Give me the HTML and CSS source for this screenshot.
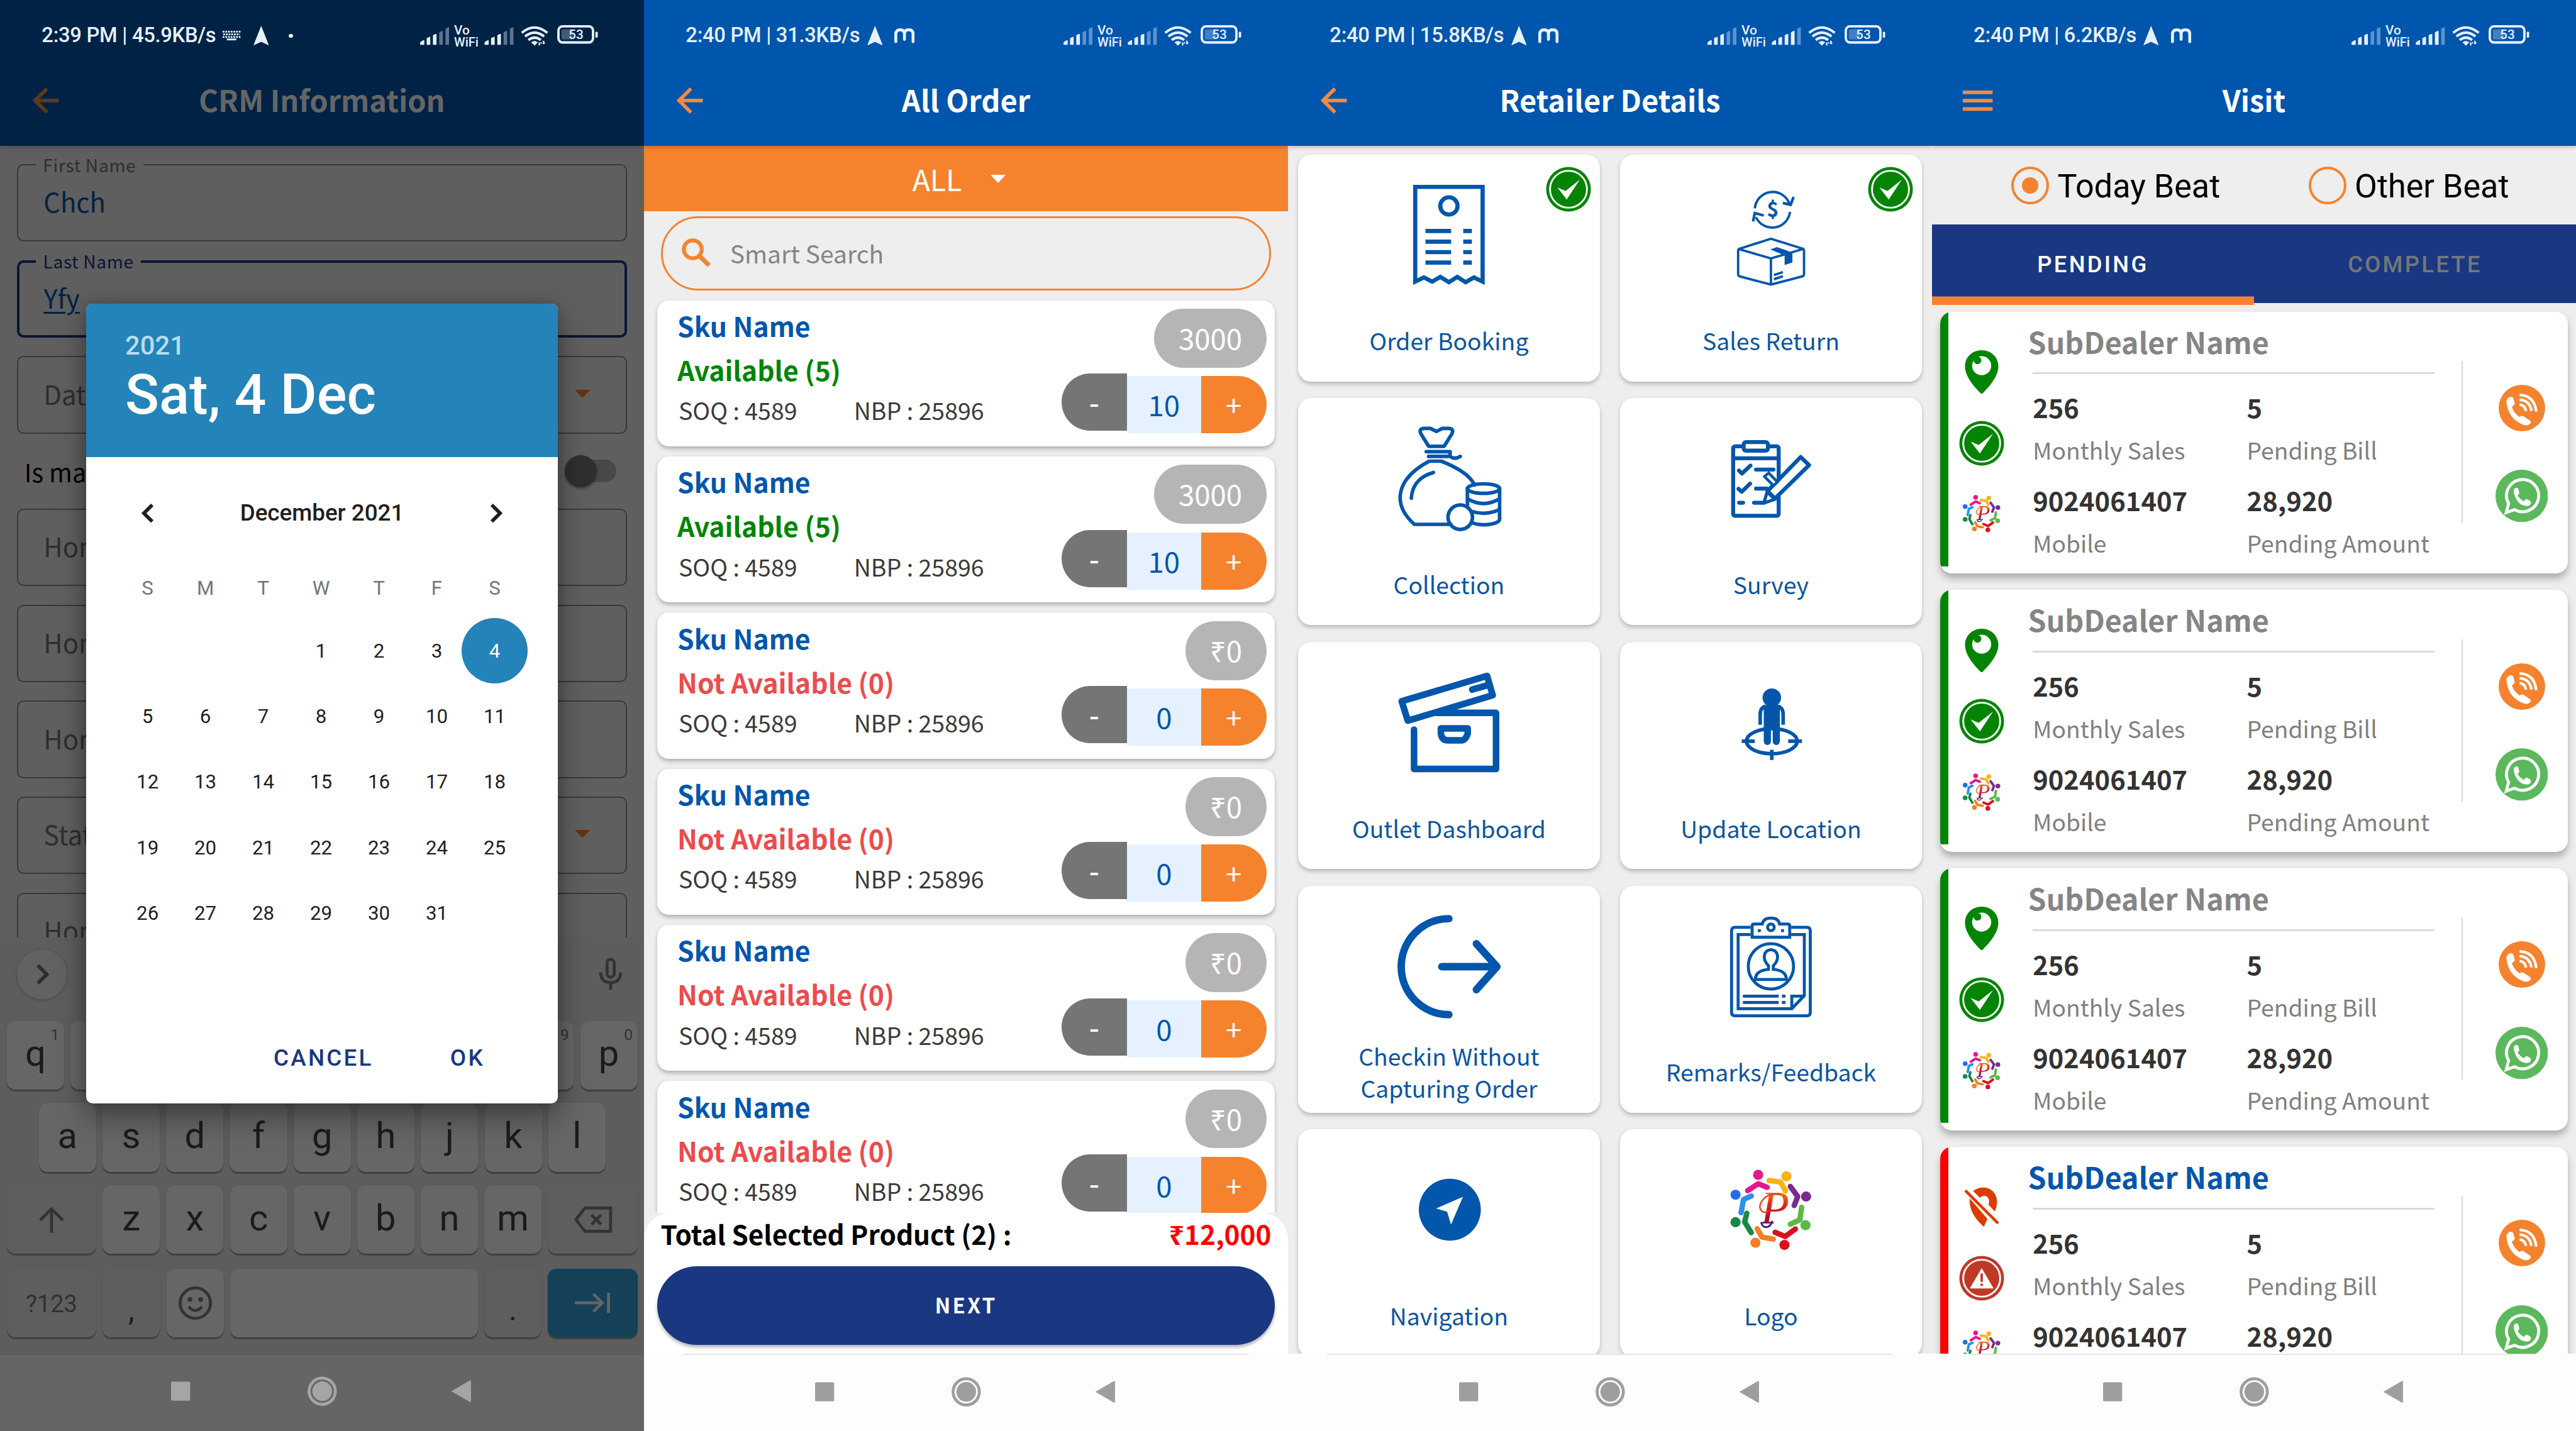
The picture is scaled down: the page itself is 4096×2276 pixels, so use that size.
FILE: index.html
```html
<!DOCTYPE html>
<html lang="en">
<head>
<meta charset="utf-8">
<title>Field Sales App</title>
<link rel="stylesheet" href="styles.css">
</head>
<body>
<svg class="sprite" aria-hidden="true">
  <defs>
    <linearGradient id="pGrad" x1="0" y1="0" x2="0" y2="1">
      <stop offset="0" stop-color="#ffc20e"/><stop offset=".45" stop-color="#e2231a"/><stop offset=".7" stop-color="#b0122a"/><stop offset="1" stop-color="#1b1a9c"/>
    </linearGradient>
    <symbol id="system" viewBox="0 0 300 36">
      <g fill="#e6f1ff">
        <path d="M0 33v-4q4-4 7-4v8zM11 33V22q3-2 6-2.500v13.500zM21.500 33V17q3-2 6-2.500v18.500z"/>
        <path opacity=".4" d="M32 33V12q3-2 6-2.500v23.500zM42.500 33V6q3-2 6-2.500v29.500z"/>
        <path d="M108 33v-4q4-4 7-4v8zM119 33V22q3-2 6-2.500v13.500zM129.500 33V17q3-2 6-2.500v18.500z"/>
        <path opacity=".4" d="M140 33V12q3-2 6-2.500v23.500z"/>
        <path opacity=".4" d="M150.500 33V6q3-2 6-2.500v29.500z"/>
        <text class="svg-net" x="57" y="15.500">Vo</text>
        <text class="svg-net" x="57" y="35.500" textLength="41" lengthAdjust="spacingAndGlyphs">WiFi</text>
        <path d="M186 28.500l6-2 5.500 2-5.500 6z"/>
        <path d="M200 29v5M204 29l-1.500 1.500M207 26v6M207 31l2-2" stroke="#e6f1ff" stroke-width="2.500"/>
        <rect x="237" y="7" width="19" height="17" rx="3" opacity=".28"/>
        <rect x="294" y="11" width="4" height="10" rx="1.500"/>
        <text class="svg-batt" x="261.500" y="23.500" text-anchor="middle">53</text>
      </g>
      <g fill="none" stroke="#e6f1ff">
        <path stroke-width="4.200" d="M170.500 13q21-18 43 0M176 19q16-13 32 0M181.500 25q10.500-8 21 0"/>
        <rect x="232" y="2" width="58" height="27" rx="7" stroke-width="4"/>
      </g>
    </symbol>
    <symbol id="locArrow" viewBox="0 0 26 33"><path fill="#e6f1ff" d="M13 0L26 33 13 27 0 33z"/></symbol>
    <symbol id="mMark" viewBox="0 0 34 25"><path fill="none" stroke="#e6f1ff" stroke-width="5" stroke-linecap="round" d="M2.500 22.500V10q0-7 7-7.500 7.500 0 7.500 7v9M17 9.500q0-7 7-7 7.500 0 7.500 7v13"/></symbol>
    <symbol id="back" viewBox="0 0 44 44"><path fill="none" stroke="currentColor" stroke-width="6" d="M44 22H4M24 2L4 22l20 20"/></symbol>
    <symbol id="navkeys" viewBox="0 0 504 50">
      <rect x="0" y="9" width="32" height="32" rx="2"/>
      <circle cx="253.500" cy="25" r="22" fill="none" stroke="currentColor" stroke-width="5"/><circle cx="253.500" cy="25" r="16.500"/>
      <path d="M470 25L501 7q2-1 2 1v34q0 2-2 1z"/>
    </symbol>
    <symbol id="check" viewBox="-38 -38 76 76">
      <circle r="37.500" fill="#048404"/><circle r="31" fill="none" stroke="#fff" stroke-width="3"/>
      <path fill="#fff" d="M-18.600-3L-5 3 19-16-3 17z"/>
    </symbol>
    <symbol id="alert" viewBox="-38 -38 76 76">
      <circle r="37.500" fill="#bf3927"/><circle r="31" fill="none" stroke="#fff" stroke-width="3"/>
      <path fill="#fff" d="M0-17L20 17h-40z"/><path stroke="#bf3927" stroke-width="4" d="M0-8V6M0 9v4"/>
    </symbol>
    <symbol id="pin" viewBox="0 0 56 73">
      <path fill="#048404" d="M28 0c16 0 28 12 28 27 0 18-17 36-26 45q-2 2-4 0C17 63 0 45 0 27 0 12 12 0 28 0z"/>
      <circle cx="28" cy="26" r="16" fill="#fff"/><circle cx="21" cy="17" r="6.500" fill="#048404"/>
    </symbol>
    <symbol id="pinOff" viewBox="0 0 62 70">
      <path fill="#dd3c00" d="M16 7C32-6 58 2 58 26q0 9-4 17L43 31c5-14-8-20-15-12zM10 20l31 36-6 14C20 57 8 40 10 20z"/>
      <path stroke="#dd3c00" stroke-width="5" d="M2 6l58 58"/>
    </symbol>
    <symbol id="call" viewBox="-39 -39 78 78">
      <circle r="39" fill="#f5832e"/>
      <path fill="#fff" d="M-26-12q2-7 8-7 3 0 4 4l2 7q0 3-5 6 4 11 13 17 4-3 7-1l9 6q5 3 2 6-5 5-12 2-26-10-28-40z"/>
      <path fill="none" stroke="#fff" stroke-width="4.500" d="M-4-22q25 1 28 28M-4-14q17 1 20 19M-4-6q9 1 11 11"/>
    </symbol>
    <symbol id="whatsapp" viewBox="-44 -44 88 88">
      <circle r="44" fill="#5cb85c"/>
      <path fill="none" stroke="#fff" stroke-width="5" d="M-26 28l4-15a27 27 0 1 1 10 10z"/>
      <path fill="#fff" d="M-13-11q4-5 7-1l2 7q0 2-3 4 4 7 11 10 3-5 6-3l5 3q2 6-5 8-16 0-22-18-2-6-1-10z"/>
    </symbol>
    <symbol id="logo" viewBox="183 65 140 140">
      <g fill="none" stroke-width="9" stroke-linecap="round" stroke-linejoin="round">
        <path stroke="#e5178c" d="M214 103l17.600-11.500 15 6"/><path stroke="#fbb216" d="M250 86l19 2.500 8.500 15"/>
        <path stroke="#7b2a90" d="M285.500 96l12.500 17-6 15"/><path stroke="#5db946" d="M304.500 131l-3 21-16 7.500"/>
        <path stroke="#d8121a" d="M294 167.500L277 180l-17-7"/><path stroke="#f37f26" d="M230 167l8 14 19 3.500"/>
        <path stroke="#168a42" d="M212.500 141l-3.500 14.500 11 18"/><path stroke="#2e8df5" d="M220 112l-13 6-4 22"/>
      </g>
      <circle cx="231.600" cy="76.500" r="8.500" fill="#e5178c"/><circle cx="279" cy="79" r="8.500" fill="#fbb216"/>
      <circle cx="312" cy="113" r="8.500" fill="#7b2a90"/><circle cx="311" cy="161" r="8.500" fill="#5db946"/>
      <circle cx="275.700" cy="194" r="8.500" fill="#d8121a"/><circle cx="227" cy="190.500" r="8.500" fill="#f37f26"/>
      <circle cx="193.700" cy="156" r="8.500" fill="#168a42"/><circle cx="193.700" cy="110" r="8.500" fill="#1f6fe8"/>
      <text class="svg-p" x="236" y="158" fill="url(#pGrad)">P</text>
      <path fill="none" stroke="#e2431a" stroke-width="2.500" d="M249 138c-12 5-18-6-12-16 7-12 20-15 32-12"/>
      <path fill="none" stroke="#35189a" stroke-width="3" stroke-linecap="round" d="M237 157c2 10 14 10 18-2"/>
    </symbol>
  </defs>
</svg>

<main class="board">

<!-- CRM information -->
<section class="phone dimmed">
  <header class="top">
    <div class="status"><span>2:39 PM | 45.9KB/s</span>
      <svg class="i-kbd" viewBox="0 0 30 16"><path stroke="#e6f1ff" stroke-width="3" stroke-dasharray="3 1.500" d="M0 1.500h30M1 6h28M0 10.500h30"/><path stroke="#e6f1ff" stroke-width="3" d="M7 14.500h16"/></svg>
      <svg class="i-arrow wide"><use href="#locArrow"/></svg><i class="dot"></i>
      <svg class="i-system"><use href="#system"/></svg></div>
    <div class="appbar"><svg class="i-back"><use href="#back"/></svg><h1>CRM Information</h1></div>
  </header>
  <div class="form">
    <div class="field"><label>First Name</label><span class="val">Chch</span></div>
    <div class="field focus"><label>Last Name</label><span class="val"><u>Yfy</u></span></div>
    <div class="field"><span>Date</span><i class="caret"></i></div>
    <div class="switch-row"><span>Is ma</span><i class="switch"></i></div>
    <div class="field"><span>Home</span></div>
    <div class="field"><span>Home</span></div>
    <div class="field"><span>Home</span></div>
    <div class="field"><span>State</span><i class="caret"></i></div>
    <div class="field"><span>Home</span></div>
  </div>
  <div class="keyboard">
    <div class="suggest">
      <svg class="i-more" viewBox="0 0 84 84"><circle cx="42" cy="42" r="42" fill="#f4f4f4"/><path fill="none" stroke="#707070" stroke-width="6" d="M35 27l15 15-15 15"/></svg>
      <svg class="i-mic" viewBox="0 0 40 54"><rect x="14" y="3" width="12" height="30" rx="6" fill="none" stroke="#808080" stroke-width="5"/><path fill="none" stroke="#808080" stroke-width="5" d="M3 25q1 17 17 17t17-17M20 42v12"/></svg>
    </div>
    <div class="keys"><b>q<sup>1</sup></b><b></b><b></b><b></b><b></b><b></b><b></b><b></b><b><sup>9</sup></b><b>p<sup>0</sup></b></div>
    <div class="keys inset"><b>a</b><b>s</b><b>d</b><b>f</b><b>g</b><b>h</b><b>j</b><b>k</b><b>l</b></div>
    <div class="keys"><b class="fn"><svg class="i-shift" viewBox="0 0 44 44"><path fill="none" stroke="#808080" stroke-width="5" d="M22 44V4M3 23L22 4l19 19"/></svg></b><b>z</b><b>x</b><b>c</b><b>v</b><b>b</b><b>n</b><b>m</b><b class="fn"><svg class="i-del" viewBox="0 0 64 44"><path fill="none" stroke="#808080" stroke-width="5" d="M18 2.500h43v39H18L3 22zM29 14l16 16M45 14L29 30"/></svg></b></div>
    <div class="keys last"><b class="fn num">?123</b><b class="fn one">,</b><b class="smile"><svg class="i-smile" viewBox="0 0 56 56"><circle cx="28" cy="28" r="25.500" fill="none" stroke="#808080" stroke-width="5"/><circle cx="19" cy="22" r="4" fill="#808080"/><circle cx="37" cy="22" r="4" fill="#808080"/><path fill="none" stroke="#808080" stroke-width="5" d="M17 34q11 13 22 0"/></svg></b><b class="space"></b><b class="fn one">.</b><b class="fn enter"><svg class="i-tab" viewBox="0 0 60 36"><path fill="none" stroke="#f4f9fc" stroke-width="5" d="M0 18h46M31 3l15 15-15 15M56.500 1v34"/></svg></b></div>
  </div>
  <footer class="nav"><svg class="i-nav"><use href="#navkeys"/></svg></footer>
  <div class="scrim"></div>
  <div class="dialog">
    <div class="dialog-head"><p class="year">2021</p><p class="date">Sat, 4 Dec</p></div>
    <div class="month"><svg viewBox="0 0 20 32"><path fill="none" stroke="#1f1f1f" stroke-width="6" d="M18 2L4 16l14 14"/></svg><span>December 2021</span><svg viewBox="0 0 20 32"><path fill="none" stroke="#1f1f1f" stroke-width="6" d="M2 2l14 14L2 30"/></svg></div>
    <div class="dow"><span>S</span><span>M</span><span>T</span><span>W</span><span>T</span><span>F</span><span>S</span></div>
    <div class="days"><span></span><span></span><span></span><span>1</span><span>2</span><span>3</span><span class="on">4</span><span>5</span><span>6</span><span>7</span><span>8</span><span>9</span><span>10</span><span>11</span><span>12</span><span>13</span><span>14</span><span>15</span><span>16</span><span>17</span><span>18</span><span>19</span><span>20</span><span>21</span><span>22</span><span>23</span><span>24</span><span>25</span><span>26</span><span>27</span><span>28</span><span>29</span><span>30</span><span>31</span></div>
    <div class="actions"><span>CANCEL</span><span>OK</span></div>
  </div>
</section>

<!-- All order -->
<section class="phone">
  <header class="top">
    <div class="status"><span>2:40 PM | 31.3KB/s</span><svg class="i-arrow"><use href="#locArrow"/></svg><svg class="i-m"><use href="#mMark"/></svg><svg class="i-system"><use href="#system"/></svg></div>
    <div class="appbar"><svg class="i-back"><use href="#back"/></svg><h1>All Order</h1></div>
  </header>
  <div class="filter"><span>ALL</span><i class="caret white"></i></div>
  <div class="orders">
    <div class="search"><svg viewBox="0 0 49 48"><circle cx="18.500" cy="18.500" r="15" fill="none" stroke="#f5832e" stroke-width="6.500"/><path stroke="#f5832e" stroke-width="7.500" d="M28 28l18 17.500"/></svg><span>Smart Search</span></div>
    <article class="sku"><div class="info"><h2>Sku Name</h2><p class="ok">Available (5)</p><p class="meta"><span>SOQ : 4589</span><span>NBP : 25896</span></p></div><div class="side"><span class="pill">3000</span><div class="step"><b>-</b><span>10</span><i>+</i></div></div></article>
    <article class="sku"><div class="info"><h2>Sku Name</h2><p class="ok">Available (5)</p><p class="meta"><span>SOQ : 4589</span><span>NBP : 25896</span></p></div><div class="side"><span class="pill">3000</span><div class="step"><b>-</b><span>10</span><i>+</i></div></div></article>
    <article class="sku"><div class="info"><h2>Sku Name</h2><p class="no">Not Available (0)</p><p class="meta"><span>SOQ : 4589</span><span>NBP : 25896</span></p></div><div class="side"><span class="pill">₹0</span><div class="step"><b>-</b><span>0</span><i>+</i></div></div></article>
    <article class="sku"><div class="info"><h2>Sku Name</h2><p class="no">Not Available (0)</p><p class="meta"><span>SOQ : 4589</span><span>NBP : 25896</span></p></div><div class="side"><span class="pill">₹0</span><div class="step"><b>-</b><span>0</span><i>+</i></div></div></article>
    <article class="sku"><div class="info"><h2>Sku Name</h2><p class="no">Not Available (0)</p><p class="meta"><span>SOQ : 4589</span><span>NBP : 25896</span></p></div><div class="side"><span class="pill">₹0</span><div class="step"><b>-</b><span>0</span><i>+</i></div></div></article>
    <article class="sku"><div class="info"><h2>Sku Name</h2><p class="no">Not Available (0)</p><p class="meta"><span>SOQ : 4589</span><span>NBP : 25896</span></p></div><div class="side"><span class="pill">₹0</span><div class="step"><b>-</b><span>0</span><i>+</i></div></div></article>
  </div>
  <div class="summary"><div class="total"><span>Total Selected Product (2) :</span><strong>₹12,000</strong></div><div class="next">NEXT</div></div>
  <footer class="nav line"><svg class="i-nav"><use href="#navkeys"/></svg></footer>
</section>

<!-- Retailer details -->
<section class="phone">
  <header class="top">
    <div class="status"><span>2:40 PM | 15.8KB/s</span><svg class="i-arrow"><use href="#locArrow"/></svg><svg class="i-m"><use href="#mMark"/></svg><svg class="i-system" viewBox="0 0 300 36"><use href="#system"/><path fill="#e6f1ff" d="M140 33V12q3-2 6-2.500v23.500z"/></svg></div>
    <div class="appbar"><svg class="i-back"><use href="#back"/></svg><h1>Retailer Details</h1></div>
  </header>
  <div class="tiles">
    <article class="tile"><svg class="badge"><use href="#check"/></svg>
      <svg class="art" viewBox="0 0 506 256"><g class="ln" stroke-width="7"><path d="M196.500 213V54h113v159l-14.500-7-14 8-14-9-14 9-14.500-9-13.500 8-14-7z"/><circle cx="253" cy="86" r="14.500"/><path d="M213.700 128h43M277 128h14.500M213.700 146h43M277 146h14.500M213.700 163.500h43M277 163.500h14.500M213.700 181h43M277 181h14.500"/></g></svg>
      <p>Order Booking</p></article>
    <article class="tile"><svg class="badge"><use href="#check"/></svg>
      <svg class="art" viewBox="0 0 506 256"><g class="ln" stroke-width="4"><path d="M226 90a30 30 0 0 1 58-8M285 96a30 30 0 0 1-57 9"/><path d="M273 81l13 3 5-13M223 112l3-14 15 4" stroke-width="4.500"/><path stroke-linejoin="round" d="M253 141l54 17q1.500 1 1.500 3v39q0 3-2 4l-53.500 14-53-14q-2-1-2-4v-39q0-2 2-3zM198 158l55 16 55-16M253 174v44"/><path d="M258 202l15-5M258 209l15-5"/></g><path fill="#0256ab" d="M252 159l11-4 26 9v17l-13 4v-16l-12-5z"/><text class="svg-usd" x="256" y="104" text-anchor="middle">$</text></svg>
      <p>Sales Return</p></article>
    <article class="tile">
      <svg class="art" viewBox="0 0 506 256"><g class="ln" stroke-width="6" stroke-linecap="round" stroke-linejoin="round"><path d="M219 81l-13-21q-4-8 5-9h11l10 5 10-5h11q9 1 5 9l-13 21zM215 90h40v8h-36M255 98q8 6 17 0"/><path d="M256 212h-61c-40-36-28-78 25-106h20q46 18 56 40M190 168q2-33 37-43"/><ellipse cx="311" cy="152" rx="27" ry="8"/><path d="M284 152v30M338 152v52c-2 8-30 12-47 5M284 169q27 16 54 0M290 190q26 8 48-3"/><circle cx="272" cy="200" r="20.500"/></g></svg>
      <p>Collection</p></article>
    <article class="tile">
      <svg class="art" viewBox="0 0 506 256"><g class="ln" stroke-width="20" stroke-linecap="round" stroke-linejoin="round" transform="translate(168 47.700) scale(.33333)"><rect x="65" y="100" width="229" height="350" rx="10"/><rect x="118" y="79" width="122" height="43" rx="12" fill="#fff"/><path d="M65 160h229M94 222l15 15 43-40M92 314l16 15 42-41M95 384h20M180 217h88M180 313h56M170 384h50"/><path fill="#fff" d="M405 154l42 41-172 168-37-38z"/><path fill="#fff" stroke-width="16" d="M236 330l-17 56 56-19z"/><path fill="#fff" stroke-width="14" d="M244 234l-22 18 46 46 20-18z"/></g></svg>
      <p>Survey</p></article>
    <article class="tile">
      <svg class="art" viewBox="0 0 506 256"><g class="ln" stroke-width="11" stroke-linecap="round" stroke-linejoin="round"><path d="M173.800 99.500L317 57l9.500 32.500L184 132zM292 80l28-8M194.500 147v66H332v-94H232M239.500 145h45v9q-4 11-10 11h-24q-9 0-11-11z"/></g></svg>
      <p>Outlet Dashboard</p></article>
    <article class="tile">
      <svg class="art" viewBox="0 0 506 256"><g class="ln" stroke-width="6"><ellipse cx="254.500" cy="166.500" rx="42.500" ry="21"/><path d="M204 166.500h22M282 166.500h23M254.500 181v17"/><path d="M235 139v-17q0-12 9-14M273.500 139v-17q0-12-9-14"/></g><path fill="#0256ab" d="M241 106h27v61q-1 6-6 6t-6-6v-22h-3v22q-1 6-6 6t-6-6z"/><circle cx="254.500" cy="93.500" r="15.500" fill="#0256ab"/></svg>
      <p>Update Location</p></article>
    <article class="tile">
      <svg class="art" viewBox="0 0 506 256"><g class="ln" stroke-width="12.500" stroke-linecap="round" stroke-linejoin="round"><path d="M253 55a80 80.500 0 0 0 0 161M241 135.500h92M299 97l34.500 38.500L299 174"/></g></svg>
      <p>Checkin Without<br>Capturing Order</p></article>
    <article class="tile">
      <svg class="art" viewBox="0 0 506 256"><g class="ln" stroke-width="5"><path d="M219 69.500h-26q-6 0-6 6V212q0 6 6 6h120q6 0 6-6V75.500q0-6-6-6h-26"/><path d="M219 81.500h-21V206h90l21-22V81.500h-22M288 206v-21h21"/><path d="M221.500 86V67q0-3 4-3h13q2-10 14.500-10t14.500 10h13q4 0 4 3v19z"/><circle cx="253" cy="69.500" r="5.500"/><path d="M231 75h5M270 75h5M206 185h60M271.500 185h6M206 195.500h60M271.500 195.500h6"/><circle cx="253" cy="135" r="38"/><path d="M249 140v-6q-8-8-7-17t11-10q10 1 11 10t-7 17v6q22 2 22 17h-52q0-15 22-17z"/></g></svg>
      <p>Remarks/Feedback</p></article>
    <article class="tile">
      <svg class="art" viewBox="0 0 506 256"><circle cx="254.500" cy="135" r="52" fill="#0256ab"/><path fill="#fff" d="M276.500 113.500L231.500 133l18.500 5.500 6.500 21.500z"/></svg>
      <p>Navigation</p></article>
    <article class="tile">
      <svg class="art" viewBox="0 0 506 256"><use href="#logo" x="183" y="65" width="140" height="140"/></svg>
      <p>Logo</p></article>
  </div>
  <footer class="nav line"><svg class="i-nav"><use href="#navkeys"/></svg></footer>
</section>

<!-- Visit -->
<section class="phone">
  <header class="top">
    <div class="status"><span>2:40 PM | 6.2KB/s</span><svg class="i-arrow"><use href="#locArrow"/></svg><svg class="i-m"><use href="#mMark"/></svg><svg class="i-system" viewBox="0 0 300 36"><use href="#system"/><path fill="#e6f1ff" d="M140 33V12q3-2 6-2.500v23.500z"/></svg></div>
    <div class="appbar"><svg class="i-menu" viewBox="0 0 50 36"><path stroke="currentColor" stroke-width="6" d="M0 4h50M0 18h50M0 32h50"/></svg><h1>Visit</h1></div>
  </header>
  <div class="beats"><span class="radio on">Today Beat</span><span class="radio">Other Beat</span></div>
  <div class="tabs"><span class="on">PENDING</span><span>COMPLETE</span></div>
  <div class="dealers">
    <article class="dealer"><div class="marks"><svg class="i-pin"><use href="#pin"/></svg><svg class="i-check"><use href="#check"/></svg><svg class="i-logo"><use href="#logo"/></svg></div>
      <div class="body"><h2>SubDealer Name</h2><dl><div><dt>256</dt><dd>Monthly Sales</dd></div><div><dt>5</dt><dd>Pending Bill</dd></div><div><dt>9024061407</dt><dd>Mobile</dd></div><div><dt>28,920</dt><dd>Pending Amount</dd></div></dl></div>
      <div class="contact"><svg class="i-call"><use href="#call"/></svg><svg class="i-wa"><use href="#whatsapp"/></svg></div></article>
    <article class="dealer"><div class="marks"><svg class="i-pin"><use href="#pin"/></svg><svg class="i-check"><use href="#check"/></svg><svg class="i-logo"><use href="#logo"/></svg></div>
      <div class="body"><h2>SubDealer Name</h2><dl><div><dt>256</dt><dd>Monthly Sales</dd></div><div><dt>5</dt><dd>Pending Bill</dd></div><div><dt>9024061407</dt><dd>Mobile</dd></div><div><dt>28,920</dt><dd>Pending Amount</dd></div></dl></div>
      <div class="contact"><svg class="i-call"><use href="#call"/></svg><svg class="i-wa"><use href="#whatsapp"/></svg></div></article>
    <article class="dealer"><div class="marks"><svg class="i-pin"><use href="#pin"/></svg><svg class="i-check"><use href="#check"/></svg><svg class="i-logo"><use href="#logo"/></svg></div>
      <div class="body"><h2>SubDealer Name</h2><dl><div><dt>256</dt><dd>Monthly Sales</dd></div><div><dt>5</dt><dd>Pending Bill</dd></div><div><dt>9024061407</dt><dd>Mobile</dd></div><div><dt>28,920</dt><dd>Pending Amount</dd></div></dl></div>
      <div class="contact"><svg class="i-call"><use href="#call"/></svg><svg class="i-wa"><use href="#whatsapp"/></svg></div></article>
    <article class="dealer missed"><div class="marks"><svg class="i-pin"><use href="#pinOff"/></svg><svg class="i-check"><use href="#alert"/></svg><svg class="i-logo"><use href="#logo"/></svg></div>
      <div class="body"><h2>SubDealer Name</h2><dl><div><dt>256</dt><dd>Monthly Sales</dd></div><div><dt>5</dt><dd>Pending Bill</dd></div><div><dt>9024061407</dt></div><div><dt>28,920</dt></div></dl></div>
      <div class="contact"><svg class="i-call"><use href="#call"/></svg><svg class="i-wa"><use href="#whatsapp"/></svg></div></article>
  </div>
  <footer class="nav line"><svg class="i-nav"><use href="#navkeys"/></svg></footer>
</section>

</main>
</body>
</html>
```
FILE: styles.css
```css
:root {
  --blue: #0256ab;
  --navy: #1a3781;
  --orange: #f5832e;
  --green: #048404;
}
/* each handset is 108rem wide and 240rem tall */
html { font-size: 9.48148px; }
* { box-sizing: border-box; margin: 0; padding: 0; }
body {
  width: 432rem; height: 240rem; overflow: hidden; background: #fff;
  font-family: "Noto Sans CJK SC", "Noto Sans", sans-serif; font-size: 3.96rem;
}
i, b, em { font-style: normal; font-weight: inherit; }
svg { display: block; flex: none; overflow: visible; }
.sprite { position: absolute; width: 0; height: 0; }
.board { display: flex; width: 432rem; height: 240rem; }
.phone {
  position: relative; display: flex; flex-direction: column;
  width: 108rem; height: 240rem; background: #eee; overflow: hidden;
}

/* header */
.top { flex: none; height: 24.45rem; background: #0055ad; color: #fff; position: relative; z-index: 1; box-shadow: 0 .3rem .6rem rgba(0,0,0,.18); }
.status {
  display: flex; align-items: center; height: 9.3rem; padding: 2.7rem 7.6rem 0 7rem;
  font: 500 3.45rem/4rem Roboto, sans-serif; color: #e6f1ff; letter-spacing: -.03rem; white-space: nowrap;
}
.i-arrow { width: 2.6rem; height: 3.3rem; margin-left: 1.2rem; }
.i-arrow.wide { margin-left: 2.2rem; }
.i-m { width: 3.4rem; height: 2.5rem; margin-left: 2rem; }
.i-kbd { width: 3rem; height: 1.6rem; margin-left: 1.1rem; }
.dot { width: .7rem; height: .7rem; border-radius: 50%; background: #e6f1ff; margin-left: 3.3rem; }
.i-system { width: 30rem; height: 3.6rem; margin-left: auto; }
.svg-net { font: 500 22px Roboto, sans-serif; letter-spacing: 0; }
.svg-batt { font: 500 22px Roboto, sans-serif; letter-spacing: 0; }
.svg-usd { font: 700 34px "Noto Sans CJK SC", sans-serif; fill: var(--blue); }
.svg-p { font: italic 78px "Liberation Serif", serif; }
.appbar { display: grid; grid-template-columns: 10rem 1fr 10rem; align-items: center; height: 15.15rem; color: #f58a3c; }
.i-back { width: 4.4rem; height: 4.4rem; margin-left: 5.5rem; }
.i-menu { width: 5rem; height: 3.6rem; margin-left: 5.2rem; }
.appbar h1 { font-size: 4.95rem; font-weight: 700; line-height: 6rem; text-align: center; color: #fff; padding-bottom: .4rem; }

/* system navigation */
.nav { flex: none; height: 12.9rem; background: #fdfdfd; margin-top: auto; display: flex; justify-content: center; padding: 3.9rem 0 0 0; position: relative; z-index: 1; }
.nav.line { background-image: linear-gradient(90deg, transparent 6.5rem, #e3e3e3 6.5rem, #e3e3e3 101.4rem, transparent 101.4rem); background-size: 100% .2rem; background-repeat: no-repeat; }
.i-nav { width: 50.4rem; height: 5rem; color: #9e9e9e; fill: #9e9e9e; margin-right: .2rem; }

/* CRM form */
.dimmed .top, .dimmed .nav { z-index: auto; }
.dimmed .status, .dimmed .i-nav { position: relative; z-index: 3; }
.dimmed .i-nav { color: #a5a5a5; fill: #a5a5a5; }
.dimmed .nav { border-top: .3rem solid #e0e0e0; padding-top: 3.6rem; }
.scrim { position: absolute; inset: 0; background: rgba(0,0,0,.6); z-index: 2; }
.form { height: 132.8rem; overflow: hidden; padding: 3.1rem 2.9rem 0; display: flex; flex-direction: column; gap: 3.1rem; }
.field {
  position: relative; flex: none; height: 13rem; border: .3rem solid #8e8e8e; border-radius: 1.1rem;
  padding: 0 2.9rem .4rem 4.2rem; display: flex; align-items: center; justify-content: space-between;
  font-size: 4.4rem; line-height: 6rem; color: #757575; white-space: nowrap;
}
.field.focus { border: .5rem solid var(--navy); padding: 0 2.7rem .4rem 4rem; }
.field label { position: absolute; left: 2.9rem; top: -1.6rem; padding: 0 1.2rem; background: #eee; font-size: 2.97rem; line-height: 3rem; letter-spacing: .07rem; color: #757575; }
.field.focus label { left: 2.7rem; top: -1.8rem; color: var(--navy); }
.field .val { color: #0256ab; }
.field u { text-underline-offset: .5rem; text-decoration-thickness: .3rem; }
.caret { border: 1.35rem solid transparent; border-top: 1.4rem solid #ff7a35; border-bottom: 0; margin-right: 3.1rem; }
.switch-row { flex: none; height: 6.4rem; display: flex; align-items: center; justify-content: space-between; padding: 0 1.7rem 0 1.2rem; color: #000; font-size: 4.2rem; line-height: 5.4rem; }
.switch { width: 7.9rem; height: 3.8rem; border-radius: 2rem; background: #b4b4b4; position: relative; }
.switch::before { content: ""; position: absolute; left: -.8rem; top: -.8rem; width: 5.4rem; height: 5.4rem; border-radius: 50%; background: #757575; box-shadow: 0 .2rem .5rem rgba(0,0,0,.4); }

.keyboard { flex: none; height: 69.8rem; background: #e9e9e9; padding: 1.6rem 1.1rem 0 1.15rem; font-family: Roboto, sans-serif; display: flex; flex-direction: column; gap: 2.3rem; }
.suggest { height: 10.1rem; display: flex; justify-content: space-between; align-items: flex-start; padding: .4rem 2.5rem 0 1.7rem; }
.i-more { width: 8.4rem; height: 8.4rem; filter: drop-shadow(0 .2rem .3rem rgba(0,0,0,.25)); }
.i-mic { width: 4rem; height: 5.4rem; margin-top: 1.4rem; }
.keys { display: flex; gap: 1.08rem; height: 11.5rem; }
.keys.inset { padding: 0 5.35rem; }
.keys.last { margin-top: .2rem; }
.keys b {
  flex: 1 1 0; min-width: 0; position: relative; background: #fff; border-radius: 1.4rem; height: 11.5rem;
  box-shadow: 0 .25rem .1rem rgba(0,0,0,.3), 0 0 .2rem rgba(0,0,0,.15);
  font-size: 6.1rem; line-height: 9rem; color: #454545; display: flex; justify-content: center; align-items: center; padding-bottom: .5rem;
}
.keys sup { position: absolute; right: .8rem; top: .9rem; font-size: 2.6rem; line-height: 3rem; color: #808080; }
.keys .fn { flex: 0 0 15rem; background: #ebebeb; font-size: 4rem; color: #7a7a7a; padding-bottom: 0; }
.keys .num { padding-top: .4rem; }
.keys .one { flex: 0 0 9.6rem; font-size: 5.2rem; padding-top: 2.4rem; color: #454545; }
.keys .smile { flex: 0 0 9.6rem; padding: 0; }
.keys .space { flex: 1 1 0; }
.keys .enter { background: #33a3dc; }
.i-shift { width: 4.4rem; height: 4.4rem; }
.i-del { width: 6.4rem; height: 4.4rem; margin-right: -.2rem; }
.i-smile { width: 5.6rem; height: 5.6rem; }
.i-tab { width: 6rem; height: 3.6rem; }

.dialog {
  position: absolute; z-index: 4; left: 14.4rem; top: 50.95rem; width: 79.2rem; height: 134.1rem;
  background: #fff; border-radius: 1.1rem; overflow: hidden; font-family: Roboto, sans-serif;
  box-shadow: 0 2.5rem 5rem rgba(0,0,0,.35), 0 0 2.500rem rgba(0,0,0,.2); color: #1f1f1f;
}
.dialog-head { height: 25.7rem; background: #2483b8; padding: 4.2rem 6.6rem; font-weight: 500; color: #fff; }
.year { font-size: 4.4rem; line-height: 5.6rem; color: #b8dcee; }
.date { font-size: 9.4rem; line-height: 10rem; margin-top: .5rem; white-space: nowrap; }
.month { display: flex; align-items: center; justify-content: space-between; height: 6rem; margin: 6.4rem 9.3rem 0 9.3rem; font-weight: 500; font-size: 3.88rem; }
.month svg { width: 2rem; height: 3.2rem; }
.dow, .days { display: grid; grid-template-columns: repeat(7, 9.7rem); margin-left: 5.5rem; font-size: 3.3rem; text-align: center; }
.dow { line-height: 6rem; margin-top: 6.7rem; color: #757575; }
.days { line-height: 11.1rem; grid-auto-rows: 11rem; margin-top: 1.9rem; }
.days .on { color: #fff; background: #2483b8; border-radius: 50%; width: 11rem; height: 11rem; margin-left: -.65rem; }
.actions { display: flex; justify-content: flex-end; gap: 12.9rem; margin-top: 15.9rem; padding-right: 12.3rem; font: 500 3.88rem/6rem Roboto, sans-serif; letter-spacing: .34rem; color: var(--navy); }

/* orders */
.filter { flex: none; height: 11rem; background: var(--orange); color: #fff; display: flex; align-items: center; padding-left: 45rem; font-size: 4.9rem; line-height: 6rem; gap: 4.8rem; }
.filter .caret.white { border-top-color: #fff; margin-top: .1rem; }
.orders { flex: none; height: 168.05rem; overflow: hidden; padding: .85rem 2.2rem 0; display: flex; flex-direction: column; gap: 1.7rem; }
.search { flex: none; height: 12.4rem; margin: 0 .6rem; border: .35rem solid var(--orange); border-radius: 6.2rem; display: flex; align-items: center; padding-left: 3.2rem; color: #858585; font-size: 4.12rem; line-height: 6rem; gap: 3.2rem; padding-bottom: .2rem; }
.search svg { width: 4.9rem; height: 4.8rem; }
.sku { flex: none; display: flex; justify-content: space-between; height: 24.49rem; background: #fff; border-radius: 2rem; box-shadow: 0 .4rem .7rem rgba(0,0,0,.25); padding: 0 1.4rem 0 3.4rem; }
.sku h2, .sku .ok, .sku .no { font-size: 4.5rem; font-weight: 700; line-height: 7.4rem; color: var(--blue); white-space: nowrap; }
.sku .info { padding-top: .55rem; }
.sku .ok { color: var(--green); }
.sku .no { color: #ec4c4c; }
.sku .meta { display: grid; grid-template-columns: 29.4rem auto; line-height: 6.2rem; color: #3b3b3b; font-size: 3.96rem; padding-left: .2rem; white-space: nowrap; }
.side { display: flex; flex-direction: column; align-items: flex-end; gap: 1.4rem; padding-top: 1.4rem; }
.pill { height: 9.9rem; border-radius: 5rem; background: #b5b5b5; color: #fff; font-size: 4.8rem; line-height: 9.5rem; padding: 0 4.1rem; }
.step { display: flex; text-align: center; font-size: 4.8rem; line-height: 9.4rem; height: 9.6rem; color: #fff; }
.step b { width: 11rem; margin-top: -.4rem; height: 9.6rem; background: #757575; border-radius: 4.8rem 0 0 4.8rem; font-weight: 500; }
.step span { width: 12.4rem; background: #e5f1fe; color: var(--blue); }
.step i { width: 11rem; background: var(--orange); border-radius: 0 4.8rem 4.8rem 0; }
.summary { flex: none; height: 23.6rem; background: #fff; border-radius: 4.4rem 4.4rem 0 0; padding: 1.8rem 2.2rem 0; }
.total { display: flex; justify-content: space-between; padding: 0 .6rem; font-weight: 700; font-size: 4.46rem; line-height: 3.1rem; height: 7.1rem; color: #000; white-space: nowrap; }
.total strong { color: #f00; font-weight: 700; }
.next { height: 13.15rem; border-radius: 6.6rem; background: var(--navy); color: #fff; font-weight: 700; font-size: 3.5rem; letter-spacing: .34rem; line-height: 13rem; text-align: center; box-shadow: 0 .4rem .6rem rgba(0,0,0,.3); }

/* retailer tiles */
.tiles { flex: none; height: 202.65rem; overflow: hidden; display: grid; grid-template-columns: 50.6rem 50.6rem; gap: 2.79rem 3.4rem; grid-auto-rows: 38.1rem; padding: 1.45rem 1.7rem 0; }
.tile { position: relative; background: #fff; border-radius: 2.2rem; box-shadow: 0 .4rem .7rem rgba(0,0,0,.22); }
.art { width: 50.6rem; height: 25.6rem; }
.ln { fill: none; stroke: var(--blue); }
.badge { position: absolute; right: 1.5rem; top: 2.1rem; width: 7.6rem; height: 7.6rem; }
.tile p { display: flex; align-items: center; justify-content: center; text-align: center; height: 11.4rem; line-height: 5.46rem; color: #0b559f; font-size: 3.94rem; }

/* visit */
.beats { flex: none; height: 13.25rem; font: 5.5rem/6rem Roboto, sans-serif; color: #000; display: grid; grid-template-columns: 49.85rem auto; padding: 3.95rem 0 0 13.3rem; white-space: nowrap; }
.radio { display: flex; align-items: center; gap: 1.4rem; height: 6rem; }
.radio::before { content: ""; width: 5.5rem; height: 5.5rem; border: .5rem solid var(--orange); border-radius: 50%; flex: none; margin-top: -.5rem; }
.radio.on::before { background: radial-gradient(circle, var(--orange) 1.35rem, transparent 1.4rem); }
.tabs { flex: none; height: 13.17rem; background: var(--navy); display: grid; grid-template-columns: 1fr 1fr; font: 500 3.85rem/13.5rem Roboto, sans-serif; letter-spacing: .34rem; text-align: center; color: #73777c; }
.tabs .on { color: #fff; box-shadow: inset 0 -1.42rem 0 var(--orange); }
.dealers { flex: none; height: 176.23rem; overflow: hidden; padding: 1.4rem 1.4rem 0; display: flex; flex-direction: column; gap: 2.74rem; }
.dealer { flex: none; display: flex; height: 43.97rem; border-radius: 2rem; background: linear-gradient(var(--green), var(--green)) 0 0 / 1.4rem 42.7rem no-repeat #fff; box-shadow: 0 .8rem 1.200rem rgba(0,0,0,.27); }
.dealer.missed { background-image: linear-gradient(#f00, #f00); }
.marks { flex: none; width: 12.4rem; padding: 6.45rem 0 0 1.4rem; display: flex; flex-direction: column; align-items: center; }
.i-pin { width: 5.9rem; height: 7.3rem; }
.i-check { width: 7.6rem; height: 7.6rem; margin-top: 4.5rem; }
.i-logo { width: 6.5rem; height: 6.5rem; margin-top: 4.8rem; }
.body { flex: none; width: 75rem; padding-left: 2.3rem; }
.body h2 { height: 10.5rem; font-size: 4.92rem; font-weight: 700; line-height: 9.9rem; color: #858585; white-space: nowrap; background: linear-gradient(#d8d8d8, #d8d8d8) .8rem 100% / 67.4rem .3rem no-repeat; }
.missed h2 { color: var(--blue); }
.body dl { display: grid; grid-template-columns: 35.9rem auto; row-gap: 1.2rem; padding: 1.9rem 0 0 .8rem; line-height: 7.2rem; white-space: nowrap; }
.body dt { font-size: 4.4rem; font-weight: 700; color: #333; }
.body dd { font-size: 3.93rem; color: #808080; }
.contact { flex: none; margin-top: 8.25rem; height: 27.2rem; border-left: .3rem solid #dadada; width: 20rem; display: flex; flex-direction: column; align-items: center; }
.i-call { width: 7.8rem; height: 7.8rem; margin-top: 4rem; }
.i-wa { width: 8.8rem; height: 8.8rem; margin-top: 6.5rem; }
```
